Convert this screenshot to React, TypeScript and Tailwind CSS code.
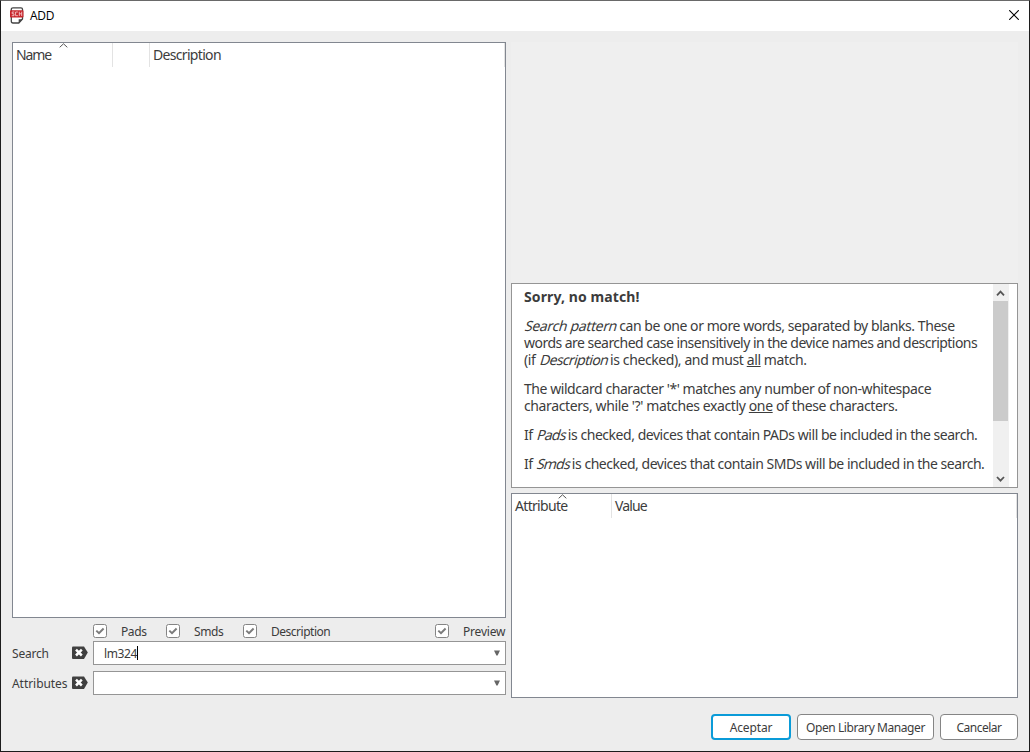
import type { ReactNode } from "react";

function Checkbox() {
  return (
    <svg width="14" height="14" viewBox="0 0 14 14" className="shrink-0">
      <rect x="0.5" y="0.5" width="13" height="13" rx="2" fill="#fff" stroke="#858585" />
      <path d="M3.3 6.6 6 9.2 10.6 4.5" fill="none" stroke="#7c7c7c" strokeWidth="2" />
    </svg>
  );
}

function Option({ label, className, text }: { label: string; className: string; text: string }) {
  return (
    <label className={`flex h-full shrink-0 items-center gap-[14px] whitespace-nowrap ${className}`}>
      <Checkbox />
      <span className={text}>{label}</span>
    </label>
  );
}

function ClearIcon() {
  return (
    <svg width="16" height="14" viewBox="0 0 16 14" className="shrink-0">
      <path d="M0 1.5Q0 .5 1 .5H12L15.8 6.5 12 13H1Q0 13 0 12Z" fill="#404040" />
      <path d="M4 3.7 9.8 9.5M9.8 3.7 4 9.5" stroke="#fff" strokeWidth="2.5" />
    </svg>
  );
}

function SearchRow({ label, text, value }: { label: string; text: string; value?: string }) {
  return (
    <div className="flex h-6 items-center">
      <span className={`w-[60px] shrink-0 whitespace-nowrap ${text}`}>{label}</span>
      <ClearIcon />
      <div className="ml-[5px] flex h-6 w-[413px] items-center border border-[#959595] bg-white pl-[10px] pr-[5px]">
        {value && <span className="tracking-[-0.4px]">{value}</span>}
        {value && <span className="h-[14px] w-px bg-black" />}
        <svg width="6" height="6" viewBox="0 0 6 6" className="ml-auto">
          <path d="M0 .5H6L3.6 5.5H2.4Z" fill="#666" />
        </svg>
      </div>
    </div>
  );
}

function SortCaret({ className }: { className: string }) {
  return (
    <svg width="9" height="5" viewBox="0 0 9 5" className={`absolute ${className}`}>
      <path d="M.7 4.3 4.5 .8 8.3 4.3" fill="none" stroke="#555" />
    </svg>
  );
}

function Line({ children, className }: { children: ReactNode; className: string }) {
  return <div className={`h-[17px] w-max whitespace-nowrap ${className}`}>{children}</div>;
}

function Oblique({ children, className }: { children: string; className: string }) {
  return <i className={`-mr-[1.5px] inline-block -skew-x-[16deg] pl-[1.5px] not-italic ${className}`}>{children}</i>;
}

function Button({ children, className }: { children: string; className: string }) {
  return (
    <button className={`h-[26px] whitespace-nowrap rounded-[4px] bg-white text-center ${className}`}>
      {children}
    </button>
  );
}

export default function App() {
  return (
    <div className="flex h-[752px] w-[1030px] flex-col border border-[#1c1c1c] border-t-[#696969] bg-[#ededed] font-['Noto_Sans',sans-serif] text-[12px] leading-[17px] text-[#3c3c3c]">
      <header className="flex h-[30px] shrink-0 items-center bg-white pb-[2px] pl-[9px] pr-[10px]">
        <svg width="14" height="17" viewBox="0 0 14 17">
          <path d="M3 .8H11Q12.5 .8 12.5 2.3V12L8.8 16H3Q1.3 16 1.3 14.3V2.3Q1.3 .8 3 .8Z" fill="#fff" stroke="#444" strokeWidth="1.3" />
          <path d="M8.7 15.8V12.3H12.6Z" fill="#444" />
          <rect x="0" y="3.2" width="13.5" height="7.3" rx=".8" fill="#c8262c" />
          <path d="M4.3 5H2.2V6.8H4V8.7H1.8M7.9 5H5.6V8.7H7.9M9.3 4.7V9M11.7 4.7V9M9.3 6.8H11.7" fill="none" stroke="#f7d9da" strokeWidth=".8" />
        </svg>
        <span className="ml-[6px] font-['Open_Sans',sans-serif] text-[12px] tracking-[-0.3px] text-black">ADD</span>
        <svg width="10" height="10" viewBox="0 0 10 10" className="ml-auto">
          <path d="M.2 .2 9.8 9.8M9.8 .2 .2 9.8" stroke="#000" strokeWidth="1.1" />
        </svg>
      </header>

      <main className="flex gap-[5px] pl-[11px] pt-[11px]">
        <section className="w-[494px]">
          <div className="h-[576px] border border-[#828790] bg-white">
            <div className="relative flex h-6 items-center text-[14px]">
              <div className="flex h-6 w-[100px] items-center border-r border-[#e3e3e3] pb-[2px] pl-[3px]">
                <span className="tracking-[-1.1px]">Name</span>
              </div>
              <div className="h-6 w-[37px] border-r border-[#e3e3e3]" />
              <div className="flex h-6 flex-1 items-center border-r border-[#e3e3e3] pb-[2px] pl-[3px]">
                <span className="tracking-[-0.68px]">Description</span>
              </div>
              <SortCaret className="left-[46px] top-0" />
            </div>
          </div>
          <div className="flex h-[23px] items-center pl-[81px] pt-[3px]">
            <Option label="Pads" className="w-[73px]" text="tracking-[-0.4px]" />
            <Option label="Smds" className="w-[77px]" text="tracking-[-0.4px]" />
            <Option label="Description" className="w-[192px]" text="tracking-[-0.48px]" />
            <Option label="Preview" className="w-[71px]" text="tracking-[-0.2px]" />
          </div>
          <div className="flex flex-col gap-[6px]">
            <SearchRow label="Search" text="tracking-[-0.2px]" value="lm324" />
            <SearchRow label="Attributes" text="tracking-[-0.05px]" />
          </div>
        </section>

        <section className="w-[507px]">
          <div className="h-[241px] bg-[#efefef]" />
          <div className="flex h-[205px] border border-[#959595] bg-white text-[14px]">
            <div className="flex w-[481px] flex-col gap-3 overflow-hidden pl-3 pt-[4px]">
              <Line className="font-bold tracking-[0.1px]">Sorry, no match!</Line>
              <div>
                <Line className="tracking-[-0.43px]"><Oblique className="tracking-[-0.35px]">Search pattern</Oblique> can be one or more words, separated by blanks. These</Line>
                <Line className="tracking-[-0.53px]">words are searched case insensitively in the device names and descriptions</Line>
                <Line className="tracking-[-0.4px]">(if <Oblique className="tracking-[-0.65px]">Description</Oblique> is checked), and must <u>all</u> match.</Line>
              </div>
              <div>
                <Line className="tracking-[-0.44px]">The wildcard character '*' matches any number of non-whitespace</Line>
                <Line className="tracking-[-0.38px]">characters, while '?' matches exactly <u>one</u> of these characters.</Line>
              </div>
              <Line className="tracking-[-0.46px]">If <Oblique className="tracking-[-0.7px]">Pads</Oblique> is checked, devices that contain PADs will be included in the search.</Line>
              <Line className="tracking-[-0.47px]">If <Oblique className="tracking-[-0.8px]">Smds</Oblique> is checked, devices that contain SMDs will be included in the search.</Line>
            </div>
            <div className="flex h-full w-4 flex-col items-center bg-[#f0f0f0]">
              <svg width="16" height="17" viewBox="0 0 16 17" className="shrink-0">
                <path d="M4 11.3 7.5 7.6 11 11.3" fill="none" stroke="#555" strokeWidth="1.8" />
              </svg>
              <div className="h-[120px] w-[15px] self-start bg-[#cbcbcb]" />
              <svg width="16" height="17" viewBox="0 0 16 17" className="mt-auto shrink-0">
                <path d="M4 7 7.5 10.7 11 7" fill="none" stroke="#555" strokeWidth="1.8" />
              </svg>
            </div>
          </div>
          <div className="mt-[5px] h-[205px] border border-[#828790] bg-white">
            <div className="relative flex h-6 items-center text-[14px]">
              <div className="flex h-6 w-[100px] items-center border-r border-[#e3e3e3] pb-[2px] pl-[3px]">
                <span className="tracking-[-0.68px]">Attribute</span>
              </div>
              <div className="flex h-6 flex-1 items-center border-r border-[#e3e3e3] pb-[2px] pl-[3px]">
                <span className="tracking-[-0.85px]">Value</span>
              </div>
              <SortCaret className="left-[46px] top-0" />
            </div>
          </div>
        </section>
      </main>

      <footer className="mt-4 flex gap-[6px] pl-[710px]">
        <Button className="w-20 border-2 border-[#0a9bd8] tracking-[-0.15px]">Aceptar</Button>
        <Button className="w-[137px] border border-[#858585] tracking-[-0.42px]">Open Library Manager</Button>
        <Button className="w-[78px] border border-[#858585] tracking-[-0.5px]">Cancelar</Button>
      </footer>
    </div>
  );
}
